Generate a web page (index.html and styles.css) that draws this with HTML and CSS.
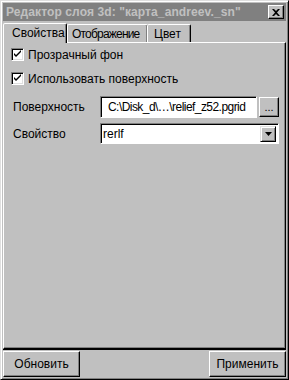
FILE: index.html
```html
<!DOCTYPE html>
<html lang="ru">
<head>
  <meta charset="UTF-8" />
  <title>Редактор слоя 3d</title>
  <link rel="stylesheet" href="styles.css">
</head>
<body>
  <div class="window">
    <div class="titlebar">
      <span class="title">Редактор слоя 3d: "карта_andreev._sn"</span>
      <span class="close-btn">
        <svg width="8" height="7" viewBox="0 0 8 7"><path d="M0 0h2l2 2 2-2h2L5 3.5 8 7H6L4 5 2 7H0l3-3.5z" fill="#000"/></svg>
      </span>
    </div>
    <div class="tabs">
      <div class="tab active tab-props">Свойства</div>
      <div class="tab tab-view">Отображение</div>
      <div class="tab tab-color">Цвет</div>
    </div>
    <div class="panel">
      <label class="check-row">
        <span class="checkbox"><svg width="9" height="9" viewBox="0 0 9 9"><path d="M1 3v2l2 2 5-5V0L3 5z" fill="#000"/></svg></span>
        Прозрачный фон
      </label>
      <label class="check-row">
        <span class="checkbox"><svg width="9" height="9" viewBox="0 0 9 9"><path d="M1 3v2l2 2 5-5V0L3 5z" fill="#000"/></svg></span>
        Использовать поверхность
      </label>
      <div class="field-row">
        <span class="field-label">Поверхность</span>
        <div class="field">
          <div class="text-box path">C:\Disk_d\…\relief_z52.pgrid</div>
          <button class="browse-btn">...</button>
        </div>
      </div>
      <div class="field-row">
        <span class="field-label">Свойство</span>
        <div class="combo">
          <span class="combo-value">rerlf</span>
          <span class="combo-arrow"><svg width="7" height="4" viewBox="0 0 7 4"><path d="M0 0h7L3.5 4z" fill="#000"/></svg></span>
        </div>
      </div>
    </div>
    <div class="footer">
      <button class="btn">Обновить</button>
      <button class="btn">Применить</button>
    </div>
  </div>
</body>
</html>
```
FILE: styles.css
```css
* {
  margin: 0;
  padding: 0;
  box-sizing: border-box;
}
body {
  width: 289px;
  height: 380px;
  background: #c0c0c0;
  font-family: 'Liberation Sans', Arial, sans-serif;
  font-size: 12px;
  color: #000;
}
.window {
  width: 289px;
  height: 380px;
  display: flex;
  flex-direction: column;
  border: 1px solid;
  border-color: #dfdfdf #000 #000 #dfdfdf;
  box-shadow: inset 1px 1px 0 #fff, inset -1px -1px 0 #808080;
  padding: 2px;
}
.titlebar {
  height: 18px;
  background: #808080;
  color: #c0c0c0;
  display: flex;
  align-items: center;
  justify-content: space-between;
  padding: 0 2px 0 3px;
}
.title {
  font-weight: bold;
  font-size: 12px;
  letter-spacing: 0.1px;
  white-space: nowrap;
}
.close-btn {
  width: 16px;
  height: 14px;
  background: #c0c0c0;
  border: 1px solid;
  border-color: #fff #000 #000 #fff;
  box-shadow: inset -1px -1px 0 #808080;
  display: flex;
  align-items: center;
  justify-content: center;
}
.tabs {
  display: flex;
  padding: 2px 0 0 1px;
  height: 21px;
  align-items: flex-end;
}
.tab {
  height: 18px;
  padding: 2px 0 0 5px;
  border: 1px solid;
  border-bottom: none;
  border-color: #fff #000 transparent #fff;
  box-shadow: inset -1px 0 0 #808080;
  border-radius: 2px 2px 0 0;
  white-space: nowrap;
  overflow: hidden;
  margin-right: -1px;
}
.tab.active {
  height: 20px;
  padding: 2px 0 0 8px;
  margin-left: -1px;
  margin-right: 0;
  margin-bottom: -1px;
  background: #c0c0c0;
  position: relative;
  z-index: 1;
}
.tab-props {
  width: 64px;
}
.tab-view {
  width: 81px;
  padding-left: 4px;
  letter-spacing: -0.8px;
}
.tab-color {
  width: 44px;
  padding-left: 6px;
}
.panel {
  flex: 1;
  border: 1px solid;
  border-color: #fff #000 #000 #fff;
  box-shadow: inset -1px -1px 0 #808080;
  padding: 5px 6px 0 7px;
  display: flex;
  flex-direction: column;
}
.check-row {
  display: flex;
  align-items: center;
  gap: 4px;
  height: 13px;
  margin-bottom: 11px;
}
.checkbox {
  width: 13px;
  height: 13px;
  background: #fff;
  border: 1px solid;
  border-color: #808080 #fff #fff #808080;
  box-shadow: inset 1px 1px 0 #000, inset -1px -1px 0 #dfdfdf;
  display: flex;
  align-items: center;
  justify-content: center;
}
.field-row {
  display: flex;
  align-items: center;
  margin-bottom: 5px;
}
.field-label {
  width: 89px;
  padding-left: 2px;
}
.field {
  flex: 1;
  display: flex;
  gap: 2px;
  align-items: center;
}
.text-box {
  flex: 1;
  height: 22px;
  background: #fff;
  border: 1px solid;
  border-color: #808080 #fff #fff #808080;
  box-shadow: inset 1px 1px 0 #000;
  padding: 3px 0 0 7px;
  white-space: nowrap;
  overflow: hidden;
  letter-spacing: -0.55px;
}
.browse-btn {
  width: 20px;
  height: 20px;
  background: #c0c0c0;
  border: 1px solid;
  border-color: #fff #000 #000 #fff;
  box-shadow: inset -1px -1px 0 #808080;
  font-family: inherit;
  font-size: 11px;
  line-height: 14px;
}
.combo {
  flex: 1;
  height: 21px;
  background: #fff;
  border: 1px solid;
  border-color: #808080 #fff #fff #808080;
  box-shadow: inset 1px 1px 0 #000;
  display: flex;
  align-items: center;
  justify-content: space-between;
  padding: 2px;
}
.combo-arrow {
  width: 16px;
  height: 16px;
  background: #c0c0c0;
  border: 1px solid;
  border-color: #dfdfdf #000 #000 #dfdfdf;
  box-shadow: inset 1px 1px 0 #fff, inset -1px -1px 0 #808080;
  display: flex;
  align-items: center;
  justify-content: center;
}
.footer {
  display: flex;
  justify-content: space-between;
  padding-top: 1px;
  border-top: 1px solid #000;
}
.btn {
  width: 77px;
  height: 26px;
  background: #c0c0c0;
  border: 1px solid;
  border-color: #fff #000 #000 #fff;
  box-shadow: inset -1px -1px 0 #808080;
  font-family: inherit;
  font-size: 12px;
}
```
